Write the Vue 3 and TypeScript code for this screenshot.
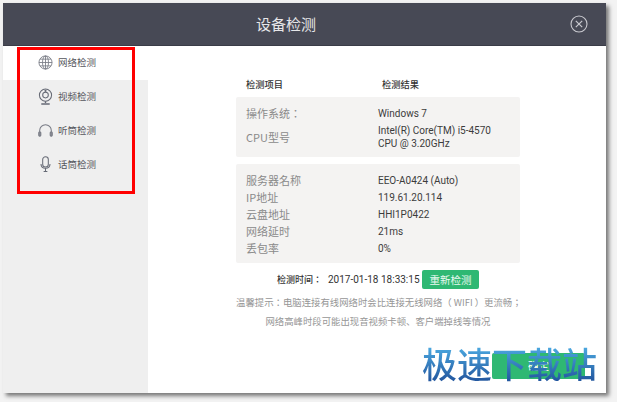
<script setup lang="ts">
const top = [
  { k: '操作系统：', v: ['Windows 7'] },
  { k: 'CPU型号', v: ['Intel(R) Core(TM) i5-4570', 'CPU @ 3.20GHz'] },
]
const net = [
  ['服务器名称', 'EEO-A0424 (Auto)'],
  ['IP地址', '119.61.20.114'],
  ['云盘地址', 'HHI1P0422'],
  ['网络延时', '21ms'],
  ['丢包率', '0%'],
]
</script>

<template>
  <div class="page">
    <div class="window">
      <header class="head">
        <span class="title">设备检测</span>
        <svg class="close" width="18" height="18" viewBox="0 0 18 18" fill="none" stroke="#c9c9cf">
          <circle cx="9" cy="9" r="8" stroke-width="1.1" />
          <path d="M5.8 5.8l6.4 6.4M12.2 5.8l-6.4 6.4" stroke-width="1.2" />
        </svg>
      </header>
      <div class="body">
        <aside class="side">
          <div class="item active">
            <svg width="15" height="15" viewBox="0 0 16 16" fill="none" stroke="#777a84" stroke-width="0.9">
              <circle cx="8" cy="8" r="7" />
              <ellipse cx="8" cy="8" rx="3.2" ry="7" />
              <path d="M8 1v14M1 8h14M2.200 4.400h11.600M2.200 11.600h11.600" />
            </svg>
            <span>网络检测</span>
          </div>
          <div class="item">
            <svg width="15" height="17" viewBox="0 0 16 18" fill="none" stroke="#666a75" stroke-width="1.1">
              <circle cx="8" cy="7.5" r="6.5" />
              <circle cx="8" cy="7.5" r="3" />
              <circle cx="8" cy="3" r="0.6" />
              <path d="M8 14v2M3.5 17h9" stroke-width="1.5" />
            </svg>
            <span>视频检测</span>
          </div>
          <div class="item">
            <svg width="15" height="15" viewBox="0 0 16 16" fill="none" stroke="#777a84" stroke-width="1.1">
              <path d="M1.800 10V8a6.200 6.200 0 0 1 12.400 0v2" />
              <rect x="0.8" y="9.5" width="2.2" height="4.5" rx="1" fill="#8b8e97" />
              <rect x="13" y="9.5" width="2.2" height="4.5" rx="1" fill="#8b8e97" />
            </svg>
            <span>听筒检测</span>
          </div>
          <div class="item">
            <svg width="15" height="16" viewBox="0 0 16 17" fill="none" stroke="#666a75" stroke-width="1.1">
              <rect x="5" y="0.8" width="6" height="11" rx="3" />
              <path d="M3.200 8.500c0 6 9.600 6 9.600 0M8 13v3.500M6 16.500h4" />
            </svg>
            <span>话筒检测</span>
          </div>
        </aside>
        <main class="main">
          <div class="cols">
            <span class="c1">检测项目</span>
            <span class="c2">检测结果</span>
          </div>
          <section class="panel sys">
            <div v-for="r in top" :key="r.k" class="sysrow">
              <span class="key">{{ r.k }}</span>
              <span class="val">
                <span v-for="l in r.v" :key="l" class="line">{{ l }}</span>
              </span>
            </div>
          </section>
          <section class="panel net">
            <div v-for="r in net" :key="r[0]" class="netrow">
              <span class="key">{{ r[0] }}</span>
              <span class="val">{{ r[1] }}</span>
            </div>
          </section>
          <div class="time">
            <span class="tl">检测时间：</span>
            <span class="tv">2017-01-18 18:33:15</span>
            <button class="btn">重新检测</button>
          </div>
          <p class="tip first">温馨提示：电脑连接有线网络时会比连接无线网络（ WIFI ）更流畅；</p>
          <p class="tip second">网络高峰时段可能出现音视频卡顿、客户端掉线等情况</p>
          <div class="ok">确定</div>
        </main>
      </div>
    </div>
    <div class="redbox"></div>
    <div class="mark">极速下载站</div>
  </div>
</template>

<style>
html, body { margin: 0; background: #f3f3f3; }
</style>

<style scoped>
.page {
  position: relative;
  width: 617px;
  height: 402px;
  overflow: hidden;
  padding: 3px 0 0 3px;
  box-sizing: border-box;
  background: #f3f3f3;
  font-family: "Noto Sans CJK SC", "Liberation Sans", sans-serif;
}
.window {
  width: 603px;
  height: 390px;
  display: flex;
  flex-direction: column;
  background: #fff;
  box-shadow: 3px 3px 4px rgba(0, 0, 0, 0.5);
}
.head {
  position: relative;
  height: 43px;
  flex: none;
  background: #474955;
  border-bottom: 1px solid #3a3c47;
  box-sizing: border-box;
  display: flex;
  align-items: center;
  padding-left: 253px;
}
.title {
  color: #e6e6e9;
  font-size: 15px;
  line-height: 20px;
}
.close {
  position: absolute;
  left: 567px;
  top: 12px;
}
.body {
  flex: 1;
  display: flex;
  min-height: 0;
}
.side {
  width: 145px;
  flex: none;
  background: #efefef;
}
.item {
  height: 34px;
  display: flex;
  align-items: center;
  gap: 5px;
  padding: 0 0 2px 35px;
  box-sizing: border-box;
  font-size: 9.500px;
  color: #55565c;
}
.item svg {
  flex: none;
}
.item.active {
  background: #fff;
}
.main {
  position: relative;
  flex: 1;
  padding: 31px 0 0 88px;
  min-width: 0;
}
.cols {
  display: flex;
  height: 14px;
  align-items: center;
  font-size: 9.250px;
  color: #333;
  font-weight: 500;
}
.c1 {
  width: 146px;
  padding-left: 10px;
  box-sizing: border-box;
}
.panel {
  width: 284px;
  background: #f4f3f2;
  border-radius: 2px;
  box-sizing: border-box;
  padding-left: 10px;
}
.sys {
  margin-top: 6px;
  height: 60px;
  padding-top: 8px;
}
.sysrow {
  display: flex;
  align-items: center;
}
.sysrow:first-child {
  height: 16px;
  margin-bottom: 3px;
}
.key {
  width: 132px;
  flex: none;
  font-family: "Noto Sans CJK TC", "Liberation Sans", sans-serif;
  font-size: 11px;
  color: #8a8a8a;
}
.netrow .key {
  padding-bottom: 2px;
}
.val {
  font-family: "Roboto", "Noto Sans CJK SC", sans-serif;
  font-size: 10px;
  color: #3c3c3c;
}
.line {
  display: block;
  line-height: 13px;
}
.net {
  margin-top: 7px;
  height: 99px;
  padding-top: 8px;
}
.netrow {
  display: flex;
  align-items: center;
  height: 17px;
}
.time {
  display: flex;
  align-items: center;
  height: 19px;
  margin-top: 7px;
  padding-left: 41px;
  font-size: 9px;
  color: #333;
}
.tl {
  font-family: "Noto Sans CJK TC", sans-serif;
  font-weight: 500;
  width: 51px;
}
.tv {
  font-family: "Roboto", sans-serif;
  font-size: 10px;
  width: 94px;
  white-space: nowrap;
}
.btn {
  width: 57px;
  height: 19px;
  margin: 0;
  padding: 0;
  border: none;
  border-radius: 2px;
  background: #2fb873;
  color: #e8f8ef;
  font: inherit;
  font-size: 10.500px;
}
.tip {
  width: 284px;
  margin: 6px 0 0;
  font-size: 9.400px;
  line-height: 14px;
  color: #969696;
  white-space: nowrap;
  text-align: center;
}
.tip.first {
  font-family: "Noto Sans CJK TC", sans-serif;
}
.tip.second {
  margin-top: 5px;
}
.ok {
  position: absolute;
  left: 344px;
  top: 307px;
  width: 93px;
  height: 26px;
  background: #2fb873;
  border-radius: 2px;
  color: #fff;
  font-size: 10.500px;
  line-height: 26px;
  text-align: center;
}
.redbox {
  position: absolute;
  left: 17px;
  top: 47px;
  width: 118px;
  height: 147px;
  box-sizing: border-box;
  border: 3px solid #f00;
}
.mark {
  position: absolute;
  left: 422px;
  top: 338px;
  font-size: 35px;
  line-height: 50px;
  white-space: nowrap;
  font-weight: 500;
  background: linear-gradient(180deg, #4aa6de 20%, #2358a0 85%);
  -webkit-background-clip: text;
  background-clip: text;
  color: transparent;
}
</style>
